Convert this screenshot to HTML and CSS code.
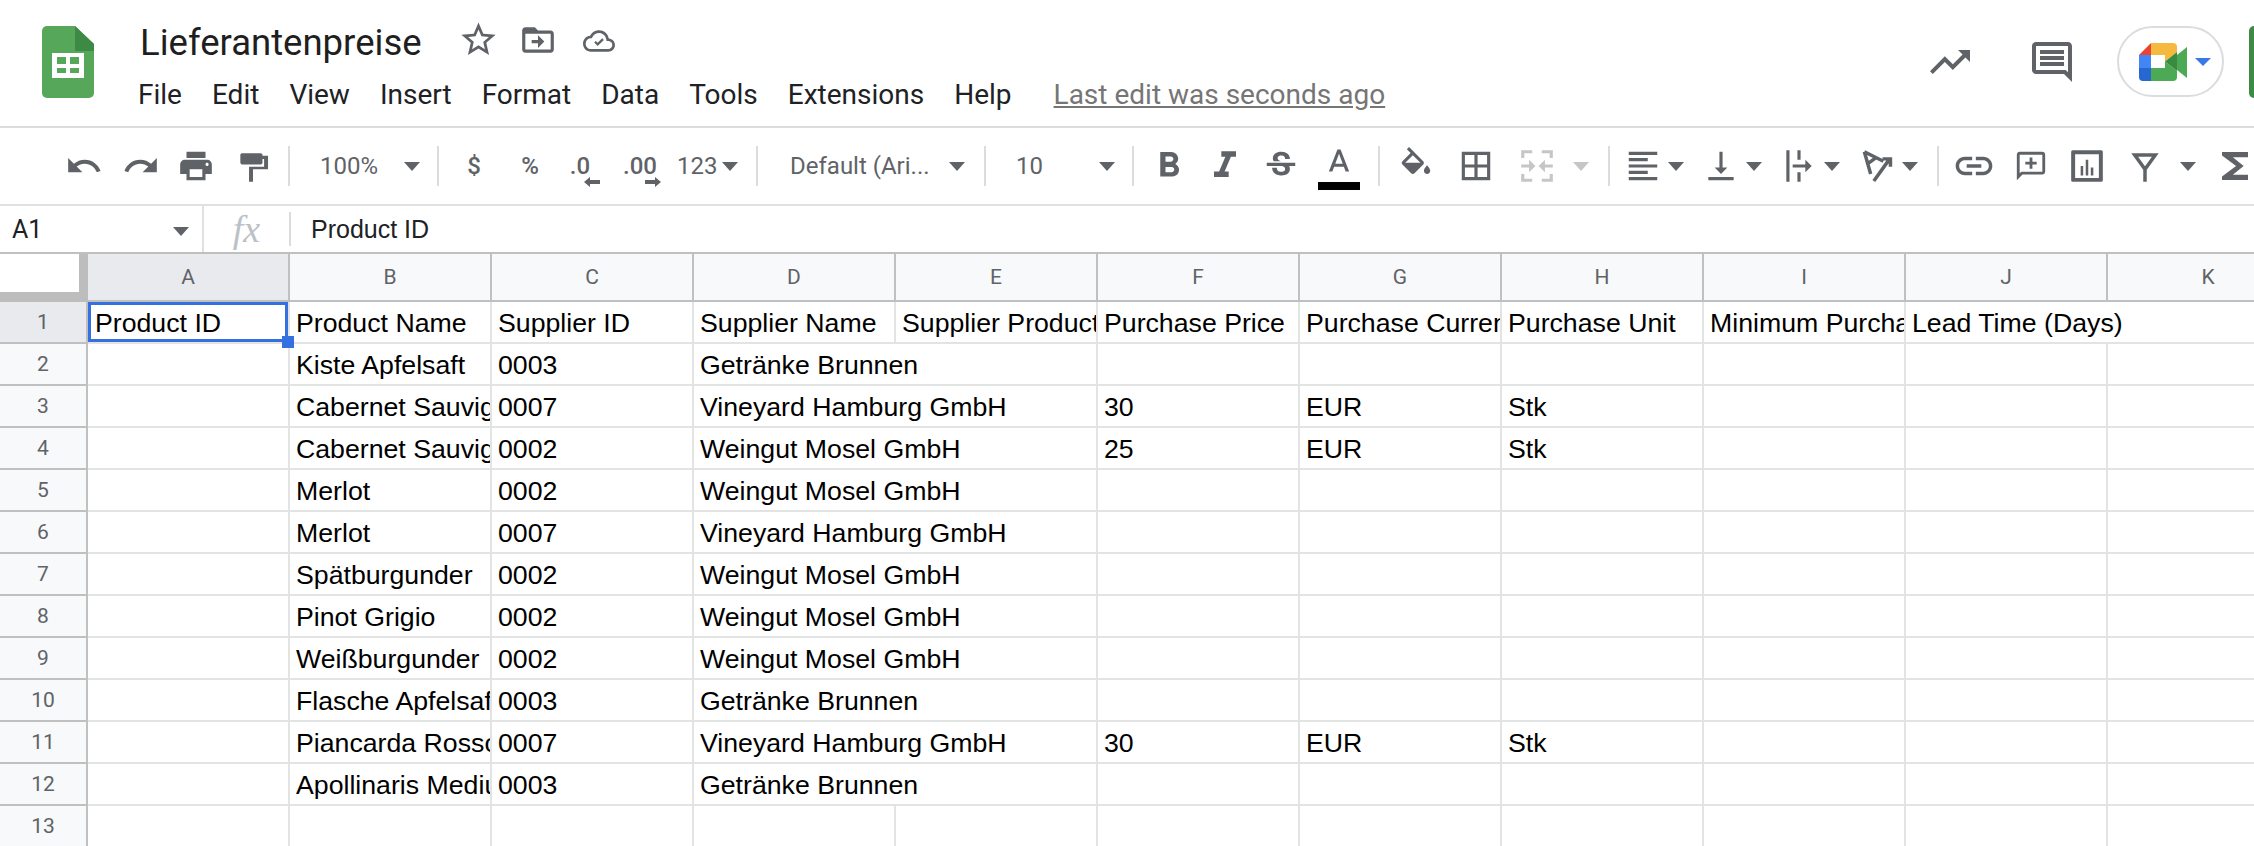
FILE: index.html
```html
<!DOCTYPE html>
<html lang="en">
<head>
<meta charset="UTF-8">
<meta name="viewport" content="width=device-width, initial-scale=1.0">
<title>Lieferantenpreise</title>
<link rel="stylesheet" href="styles.css">
</head>
<body>
<header class="title-bar">
  <svg class="logo" viewBox="0 0 52 72">
    <path fill="#57a75b" d="M5 0H33L52 18V67a5 5 0 0 1-5 5H5a5 5 0 0 1-5-5V5a5 5 0 0 1 5-5z"/>
    <path fill="#3c8a43" d="M33 0L52 18V25H33z"/>
    <path fill="#fff" d="M10 27H42V52H10zM15 31V38H24V31zM28 31V38H37V31zM15 42V47H24V42zM28 42V47H37V42z" fill-rule="evenodd"/>
  </svg>
  <div class="doc">
    <div class="doc-title">
      <span class="doc-name">Lieferantenpreise</span>
      <svg class="star" viewBox="0 0 24 24"><path d="M22 9.24l-7.19-.62L12 2 9.19 8.63 2 9.24l5.46 4.73L5.82 21 12 17.27 18.18 21l-1.63-7.03L22 9.24zM12 15.4l-3.76 2.27 1-4.28-3.32-2.88 4.38-.38L12 6.1l1.71 4.04 4.38.38-3.32 2.88 1 4.28L12 15.4z"/></svg>
      <svg class="folder" viewBox="0 0 24 24"><path d="M20 6h-8l-2-2H4c-1.1 0-2 .9-2 2v12c0 1.1.9 2 2 2h16c1.1 0 2-.9 2-2V8c0-1.1-.9-2-2-2zm0 12H4V8h16v10zM12 17l4-4-4-4v3H8v2h4z"/></svg>
      <svg class="cloud" viewBox="0 0 24 24"><path d="M19.35 10.04C18.67 6.59 15.64 4 12 4 9.11 4 6.6 5.64 5.35 8.04 2.34 8.36 0 10.91 0 14c0 3.31 2.69 6 6 6h13c2.76 0 5-2.24 5-5 0-2.64-2.05-4.78-4.65-4.96zM19 18H6c-2.21 0-4-1.79-4-4 0-2.05 1.53-3.76 3.56-3.97l1.07-.11.5-.95C8.08 7.14 9.94 6 12 6c2.62 0 4.88 1.86 5.39 4.43l.3 1.5 1.53.11c1.56.1 2.78 1.41 2.78 2.96 0 1.65-1.35 3-3 3zm-8-2.2l-2.6-2.6 1.2-1.2 1.4 1.4 3.4-3.4 1.2 1.2z"/></svg>
    </div>
    <nav class="menu">
      <span>File</span><span>Edit</span><span>View</span><span>Insert</span><span>Format</span><span>Data</span><span>Tools</span><span>Extensions</span><span>Help</span>
      <a class="last-edit">Last edit was seconds ago</a>
    </nav>
  </div>
  <div class="actions">
    <svg class="act-trend" viewBox="0 0 24 24"><path d="M16 6l2.29 2.29-4.88 4.88-4-4L2 16.59 3.41 18l6-6 4 4 6.3-6.29L22 12V6z"/></svg>
    <svg class="act-comment" viewBox="0 0 24 24"><path d="M21.99 4c0-1.1-.89-2-1.99-2H4c-1.1 0-2 .9-2 2v12c0 1.1.9 2 2 2h14l4 4-.01-18zM20 4v13.17L18.83 16H4V4h16zM6 12h12v2H6zm0-3h12v2H6zm0-3h12v2H6z"/></svg>
    <div class="meet">
      <svg class="meet-logo" viewBox="0 0 48 38">
        <path fill="#ea4335" d="M12 0L0 12H12z"/>
        <path fill="#f6b93f" d="M12 0H34a4 4 0 0 1 4 4V9L26 18.5V12H12z"/>
        <path fill="#4285f4" d="M0 12H12V25H0z"/>
        <path fill="#2767d2" d="M0 25H12V38H4a4 4 0 0 1-4-4z"/>
        <path fill="#4caa56" d="M12 25H26V18.5L38 28V34a4 4 0 0 1-4 4H12z"/>
        <path fill="#3a8a3f" d="M26 18.5L38 9V28z"/>
        <path fill="#4caa56" d="M38 12L48 4V35L38 27z"/>
      </svg>
      <span class="meet-caret"></span>
    </div>
    <div class="account-edge"></div>
  </div>
</header>

<div class="toolbar">
  <span class="tool w56"><svg viewBox="0 0 24 24"><path d="M12.5 8c-2.65 0-5.05.99-6.9 2.6L2 7v9h9l-3.62-3.62c1.39-1.16 3.16-1.88 5.12-1.88 3.54 0 6.55 2.31 7.6 5.5l2.37-.78C21.08 11.03 17.15 8 12.5 8z"/></svg></span>
  <span class="tool w58"><svg viewBox="0 0 24 24"><path d="M18.4 10.6C16.55 8.99 14.15 8 11.5 8c-4.65 0-8.58 3.03-9.96 7.22L3.9 16c1.05-3.19 4.05-5.5 7.6-5.5 1.95 0 3.73.72 5.12 1.88L13 16h9V7l-3.6 3.6z"/></svg></span>
  <span class="tool w52"><svg viewBox="0 0 24 24"><path d="M19 8H5c-1.66 0-3 1.34-3 3v6h4v4h12v-4h4v-6c0-1.66-1.34-3-3-3zm-3 11H8v-5h8v5zm3-7c-.55 0-1-.45-1-1s.45-1 1-1 1 .45 1 1-.45 1-1 1zm-1-9H6v4h12V3z"/></svg></span>
  <span class="tool w62"><svg viewBox="0 0 24 24"><path d="M5 4h12c.5 0 1 .5 1 1v5c0 .5-.5 1-1 1H5c-.5 0-1-.5-1-1V5c0-.5.5-1 1-1zM18 5.500h3.500V14H12v8H9.500V12.500H19V7.500h-1z"/></svg></span>
  <span class="sep ml4"></span>

  <span class="select w147 pl30 pr17">100%<i class="caret"></i></span>
  <span class="sep"></span>

  <span class="tool tool-text w70">$</span>
  <span class="tool tool-text w42">%</span>
  <span class="tool w58 decimal">.0<svg viewBox="0 0 16 10"><path d="M0 5L6 0V3H16V7H6V10z"/></svg></span>
  <span class="tool w62 decimal">.00<svg class="arrow-right" viewBox="0 0 16 10"><path d="M16 5L10 0V3H0V7H10V10z"/></svg></span>
  <span class="select w73 pl6 pr6 mr12">123<i class="caret"></i></span>
  <span class="sep"></span>

  <span class="select w226 pl32 pr19">Default (Ari...<i class="caret"></i></span>
  <span class="sep"></span>
  <span class="select w146 pl30 pr17">10<i class="caret"></i></span>
  <span class="sep"></span>

  <span class="tool w70"><svg class="bold" viewBox="0 0 24 24"><path d="M15.600 10.790c.97-.67 1.650-1.770 1.650-2.790 0-2.260-1.750-4-4-4H7v14h7.040c2.090 0 3.710-1.700 3.710-3.790 0-1.520-.86-2.820-2.150-3.420zM10 6.500h3c.83 0 1.500.67 1.500 1.500s-.67 1.500-1.500 1.500h-3v-3zm3.500 9H10v-3h3.500c.83 0 1.500.67 1.500 1.500s-.67 1.500-1.500 1.500z"/></svg></span>
  <span class="tool w42"><svg class="italic" viewBox="0 0 24 24"><path d="M10 4v3h2.210l-3.420 8H6v3h8v-3h-2.210l3.420-8H18V4z"/></svg></span>
  <span class="tool w70"><svg viewBox="0 0 24 24"><path d="M7.240 8.750c-.26-.48-.39-1.030-.39-1.670 0-.61.13-1.160.4-1.670.26-.5.63-.93 1.110-1.290.48-.35 1.050-.63 1.700-.83.66-.19 1.390-.29 2.180-.29.81 0 1.540.11 2.210.34.66.22 1.230.54 1.690.94.47.4.83.88 1.080 1.430.25.55.38 1.150.38 1.810h-3.010c0-.31-.05-.59-.15-.85-.09-.27-.24-.49-.44-.68-.2-.19-.45-.33-.75-.44-.3-.1-.66-.16-1.060-.16-.39 0-.74.04-1.030.13-.29.09-.53.21-.72.36-.19.16-.34.34-.44.55-.1.21-.15.43-.15.66 0 .48.25.88.74 1.210.38.25.77.48 1.410.7H7.390c-.05-.08-.11-.17-.15-.25zM21 12v-2H3v2h9.620c.18.07.4.14.55.2.37.17.66.34.87.51.21.17.35.36.43.57.07.2.11.43.11.69 0 .23-.05.45-.14.66-.09.2-.23.38-.42.53-.19.15-.42.26-.71.35-.29.08-.63.13-1.010.13-.43 0-.83-.04-1.180-.13s-.66-.23-.91-.42c-.25-.19-.45-.44-.59-.75-.14-.31-.25-.76-.25-1.210H6.400c0 .55.08 1.130.24 1.580.16.45.37.85.65 1.210.28.35.6.66.98.92.37.26.78.48 1.220.65.44.17.9.3 1.380.39.48.08.96.13 1.440.13.8 0 1.530-.09 2.180-.28s1.210-.45 1.670-.79c.46-.34.82-.77 1.070-1.270s.38-1.070.38-1.710c0-.6-.1-1.140-.31-1.610-.05-.11-.11-.23-.17-.33H21z"/></svg></span>
  <span class="tool w46 text-color">
    <svg viewBox="0 2 24 16"><path d="M11 3L5.500 17h2.250l1.120-3h6.250l1.120 3h2.250L13 3h-2zm-1.380 9L12 5.670 14.380 12H9.620z"/></svg>
    <i class="color-bar"></i>
  </span>
  <span class="sep ml16"></span>

  <span class="tool w72"><svg viewBox="0 0 24 24"><path d="M16.560 8.940L7.620 0 6.210 1.410l2.380 2.380-5.150 5.150c-.59.59-.59 1.540 0 2.120l5.500 5.500c.29.29.68.44 1.060.44s.77-.15 1.060-.44l5.500-5.500c.59-.58.59-1.530 0-2.120zM5.210 10L10 5.210 14.790 10H5.210zM19 11.500s-2 2.170-2 3.500c0 1.100.9 2 2 2s2-.9 2-2c0-1.330-2-3.500-2-3.500z"/></svg></span>
  <span class="tool w48"><svg viewBox="0 0 24 24"><path d="M3 3v18h18V3H3zm8 16H5v-6h6v6zm0-8H5V5h6v6zm8 8h-6v-6h6v6zm0-8h-6V5h6v6z"/></svg></span>
  <span class="split disabled ml18 gap17 mr19">
    <svg viewBox="0 0 24 24"><path d="M2 2h7v2H4v3H2zM15 2h7v5h-2V4h-5zM2 17h2v3h5v2H2zM20 17h2v5h-7v-2h5zM2 11h5V8l4 4-4 4v-3H2zM22 11h-5V8l-4 4 4 4v-3h5z"/></svg>
    <i class="caret"></i>
  </span>
  <span class="sep"></span>

  <div class="splits">
    <span class="split"><svg viewBox="0 0 24 24"><path d="M15 15H3v2h12v-2zm0-8H3v2h12V7zM3 13h18v-2H3v2zm0 8h18v-2H3v2zM3 3v2h18V3H3z"/></svg><i class="caret"></i></span>
    <span class="split"><svg viewBox="0 0 24 24"><path d="M16 13h-3V3h-2v10H8l4 4 4-4zM4 19v2h16v-2H4z"/></svg><i class="caret"></i></span>
    <span class="split"><svg viewBox="0 0 24 24"><path d="M4 2h2v20H4zM11 2h2v6h-2zM11 16h2v6h-2zM8 11h8V8l4 4-4 4v-3H8z"/></svg><i class="caret"></i></span>
    <span class="split"><svg viewBox="0 0 24 24"><path class="line" d="M4 3L8 17M4 3L16 9M6.200 10.500L11 7M10 21.500L20 7.500M15.500 7.500H20.500V12.500"/></svg><i class="caret"></i></span>
  </div>
  <span class="sep"></span>

  <svg class="link-icon ml13" viewBox="0 0 24 24"><path d="M3.900 12c0-1.710 1.390-3.100 3.100-3.100h4V7H7c-2.760 0-5 2.240-5 5s2.240 5 5 5h4v-1.900H7c-1.710 0-3.100-1.390-3.100-3.100zM8 13h8v-2H8v2zm9-6h-4v1.900h4c1.710 0 3.100 1.390 3.100 3.100s-1.390 3.100-3.100 3.100h-4V17h4c2.760 0 5-2.240 5-5s-2.240-5-5-5z"/></svg>
  <svg class="add-comment ml18" viewBox="0 0 24 24"><path d="M4 2h16c1.100 0 2 .9 2 2v12c0 1.100-.9 2-2 2H6l-4 4V4c0-1.100.9-2 2-2zm0 2v13.170L5.170 16H20V4H4zm7 2h2v3h3v2h-3v3h-2v-3H8V9h3V6z"/></svg>
  <svg class="ml20" viewBox="0 0 24 24"><path fill-rule="evenodd" d="M3 2H21a1 1 0 0 1 1 1V21a1 1 0 0 1-1 1H3a1 1 0 0 1-1-1V3a1 1 0 0 1 1-1zM4.500 4.500V19.500H19.500V4.500zM8 12H9.600V18H8zM11.200 8H12.800V18H11.200zM14.400 13H16V18H14.400z"/></svg>
  <svg class="ml20" viewBox="0 0 24 24"><path class="line" d="M5.500 5H18.500L12 14zM12 14V22"/></svg>
  <i class="caret ml16"></i>
  <svg class="sigma ml26" viewBox="6 4 12 16" preserveAspectRatio="none"><path d="M18 4H6v2l6.500 6L6 18v2h12v-3h-7l5-5-5-5h7z"/></svg>
</div>

<div class="formula-bar">
  <div class="name-box">A1<i class="caret"></i></div>
  <div class="fx">fx</div>
  <div class="formula-text">Product ID</div>
</div>

<table class="sheet">
  <colgroup>
    <col class="col-rows">
    <col class="col"><col class="col"><col class="col"><col class="col"><col class="col"><col class="col">
    <col class="col"><col class="col"><col class="col"><col class="col"><col class="col">
  </colgroup>
  <thead>
    <tr>
      <th class="corner"></th>
      <th class="active">A</th><th>B</th><th>C</th><th>D</th><th>E</th><th>F</th><th>G</th><th>H</th><th>I</th><th>J</th><th>K</th>
    </tr>
  </thead>
  <tbody>
    <tr>
      <th class="active">1</th>
      <td class="selected">Product ID<i class="handle"></i></td><td>Product Name</td><td>Supplier ID</td><td>Supplier Name</td><td>Supplier Product ID</td><td>Purchase Price</td><td>Purchase Currency</td><td>Purchase Unit</td><td>Minimum Purchase Quantity</td><td colspan="2">Lead Time (Days)</td>
    </tr>
    <tr>
      <th>2</th>
      <td></td><td>Kiste Apfelsaft</td><td>0003</td><td colspan="2">Getränke Brunnen</td><td></td><td></td><td></td><td></td><td></td><td></td>
    </tr>
    <tr>
      <th>3</th>
      <td></td><td>Cabernet Sauvignon</td><td>0007</td><td colspan="2">Vineyard Hamburg GmbH</td><td>30</td><td>EUR</td><td>Stk</td><td></td><td></td><td></td>
    </tr>
    <tr>
      <th>4</th>
      <td></td><td>Cabernet Sauvignon</td><td>0002</td><td colspan="2">Weingut Mosel GmbH</td><td>25</td><td>EUR</td><td>Stk</td><td></td><td></td><td></td>
    </tr>
    <tr>
      <th>5</th>
      <td></td><td>Merlot</td><td>0002</td><td colspan="2">Weingut Mosel GmbH</td><td></td><td></td><td></td><td></td><td></td><td></td>
    </tr>
    <tr>
      <th>6</th>
      <td></td><td>Merlot</td><td>0007</td><td colspan="2">Vineyard Hamburg GmbH</td><td></td><td></td><td></td><td></td><td></td><td></td>
    </tr>
    <tr>
      <th>7</th>
      <td></td><td>Spätburgunder</td><td>0002</td><td colspan="2">Weingut Mosel GmbH</td><td></td><td></td><td></td><td></td><td></td><td></td>
    </tr>
    <tr>
      <th>8</th>
      <td></td><td>Pinot Grigio</td><td>0002</td><td colspan="2">Weingut Mosel GmbH</td><td></td><td></td><td></td><td></td><td></td><td></td>
    </tr>
    <tr>
      <th>9</th>
      <td></td><td>Weißburgunder</td><td>0002</td><td colspan="2">Weingut Mosel GmbH</td><td></td><td></td><td></td><td></td><td></td><td></td>
    </tr>
    <tr>
      <th>10</th>
      <td></td><td>Flasche Apfelsaft</td><td>0003</td><td colspan="2">Getränke Brunnen</td><td></td><td></td><td></td><td></td><td></td><td></td>
    </tr>
    <tr>
      <th>11</th>
      <td></td><td>Piancarda Rosso</td><td>0007</td><td colspan="2">Vineyard Hamburg GmbH</td><td>30</td><td>EUR</td><td>Stk</td><td></td><td></td><td></td>
    </tr>
    <tr>
      <th>12</th>
      <td></td><td>Apollinaris Medium</td><td>0003</td><td colspan="2">Getränke Brunnen</td><td></td><td></td><td></td><td></td><td></td><td></td>
    </tr>
    <tr>
      <th>13</th>
      <td></td><td></td><td></td><td></td><td></td><td></td><td></td><td></td><td></td><td></td><td></td>
    </tr>
  </tbody>
</table>
</body>
</html>
```

FILE: styles.css
```css
html, body { margin: 0; height: 846px; overflow: hidden; background-color: white; }
body { width: 2254px; font-family: Roboto, sans-serif; color: #202124; }
svg { fill: #5f6368; flex: none; display: block; }
i { display: block; }

/* title bar */
.title-bar { display: flex; height: 126px; padding-left: 42px; box-sizing: border-box; }
.logo { width: 52px; height: 72px; margin-top: 26px; margin-right: 46px; }
.doc-title { display: flex; align-items: center; height: 48px; margin-top: 18px; }
.doc-name { font-size: 36.5px; color: #1f1f1f; width: 282px; white-space: nowrap; }
.star { width: 41px; height: 41px; margin-left: 36px; margin-bottom: 5px; }
.folder { width: 38px; height: 38px; margin-left: 20px; margin-bottom: 4px; }
.cloud { width: 32px; height: 32px; margin-left: 26px; margin-bottom: 2px; }
.menu { display: flex; gap: 30px; align-items: center; height: 34px; margin-top: 11px; margin-left: -2px; font-size: 28px; }
.last-edit { margin-left: 12px; color: #757575; text-decoration: underline; }

.actions { display: flex; align-items: center; margin-left: auto; height: 123px; }
.act-trend { width: 48px; height: 48px; }
.act-comment { width: 48px; height: 48px; margin-left: 54px; }
.meet { display: flex; align-items: center; box-sizing: border-box; width: 107px; height: 71px; margin-left: 41px; padding-left: 20px; border: 2px solid #dadce0; border-radius: 36px; }
.meet-logo { width: 48px; height: 38px; }
.meet-caret { width: 0; height: 0; margin-left: 8px; border-left: 8px solid transparent; border-right: 8px solid transparent; border-top: 8px solid #3b78e7; }
.account-edge { width: 5px; height: 72px; margin-left: 25px; background-color: #3c8a43; border-radius: 8px 0 0 8px; }

/* toolbar */
.toolbar { display: flex; align-items: center; height: 76px; padding-left: 56px; border-top: 2px solid #dadce0; border-bottom: 2px solid #e0e0e0; color: #5f6368; white-space: nowrap; }
.toolbar svg { width: 38px; height: 38px; }
.tool { display: flex; justify-content: center; align-items: center; flex: none; height: 60px; }
.tool-text { font-size: 24px; font-weight: 500; }
.sep { flex: none; width: 2px; height: 40px; background-color: #dadce0; }
.select { display: flex; align-items: center; justify-content: space-between; flex: none; box-sizing: border-box; height: 60px; font-size: 24px; }
.caret { flex: none; width: 0; height: 0; border-left: 8px solid transparent; border-right: 8px solid transparent; border-top: 9px solid #5f6368; }
.split { display: flex; align-items: center; flex: none; gap: 6px; }
.splits { display: flex; gap: 18px; padding-left: 14px; padding-right: 19px; }
.disabled svg { fill: #c4c6c8; }
.disabled .caret { border-top-color: #c4c6c8; }
.line { fill: none; stroke: #5f6368; stroke-width: 2.2; }

.decimal { position: relative; font-size: 24px; font-weight: 500; }
.toolbar .decimal svg { position: absolute; left: 33px; top: 41px; width: 16px; height: 10px; }
.toolbar .decimal svg.arrow-right { left: 36px; }

.text-color { flex-direction: column; height: 42px; margin-top: 6px; }
.toolbar .text-color svg { height: 25px; }
.color-bar { width: 42px; height: 8px; margin-top: 9px; background-color: black; }
.toolbar .bold { width: 42px; height: 42px; }
.toolbar .italic { width: 44px; height: 44px; }
.toolbar .link-icon { width: 44px; height: 44px; }
.toolbar .add-comment { width: 34px; height: 34px; }
.toolbar .sigma { width: 26px; height: 28px; }

.w42 { width: 42px; } .w46 { width: 46px; } .w48 { width: 48px; } .w52 { width: 52px; }
.w56 { width: 56px; } .w58 { width: 58px; } .w62 { width: 62px; } .w70 { width: 70px; }
.w72 { width: 72px; } .w73 { width: 73px; } .w146 { width: 146px; } .w147 { width: 147px; } .w226 { width: 226px; }
.pl6 { padding-left: 6px; } .pl30 { padding-left: 30px; } .pl32 { padding-left: 32px; }
.pr6 { padding-right: 6px; } .pr17 { padding-right: 17px; } .pr19 { padding-right: 19px; }
.ml4 { margin-left: 4px; } .ml13 { margin-left: 13px; } .ml16 { margin-left: 16px; } .ml18 { margin-left: 18px; }
.ml20 { margin-left: 20px; } .ml26 { margin-left: 26px; }
.mr12 { margin-right: 12px; } .mr19 { margin-right: 19px; } .gap17 { gap: 17px; }

/* formula bar */
.formula-bar { display: flex; align-items: center; height: 46px; font-size: 25px; }
.name-box { display: flex; align-items: center; justify-content: space-between; box-sizing: border-box; width: 204px; height: 46px; padding-left: 12px; padding-right: 13px; border-right: 2px solid #e0e0e0; font-family: Roboto, sans-serif; }
.name-box .caret { margin-top: 4px; }
.fx { box-sizing: border-box; width: 87px; height: 34px; line-height: 34px; text-align: center; border-right: 2px solid #dadce0; font-family: "Liberation Serif", serif; font-style: italic; font-size: 38px; color: #bdc1c6; }
.formula-text { margin-left: 20px; font-family: "Liberation Sans", sans-serif; color: #202124; }

/* grid */
.sheet { table-layout: fixed; width: 2310px; border-collapse: separate; border-spacing: 0; border-top: 2px solid #c0c0c0; font-family: "Liberation Sans", Arial, sans-serif; font-size: 26.7px; color: black; }
.col-rows { width: 88px; }
.col { width: 202px; }
.sheet th { box-sizing: border-box; padding: 0; background-color: #f8f9fa; font-family: Roboto, sans-serif; font-weight: 400; font-size: 21px; color: #5f6368; text-align: center; border-right: 2px solid #c0c0c0; border-bottom: 2px solid #c0c0c0; }
.sheet thead th { height: 48px; }
.sheet .corner { background-color: white; border-right: 9px solid #bdbdbd; border-bottom: 10px solid #bdbdbd; }
.sheet .active { background-color: #e8eaed; }
.sheet td { box-sizing: border-box; height: 42px; padding: 2px 0 0 6px; overflow: hidden; white-space: nowrap; border-right: 2px solid #e2e3e3; border-bottom: 2px solid #e2e3e3; }
.sheet .selected { position: relative; overflow: visible; padding-left: 7px; box-shadow: inset 0 0 0 3px #3570e0; }
.handle { position: absolute; right: -6px; bottom: -6px; width: 12px; height: 12px; background-color: #3570e0; z-index: 1; }
```
